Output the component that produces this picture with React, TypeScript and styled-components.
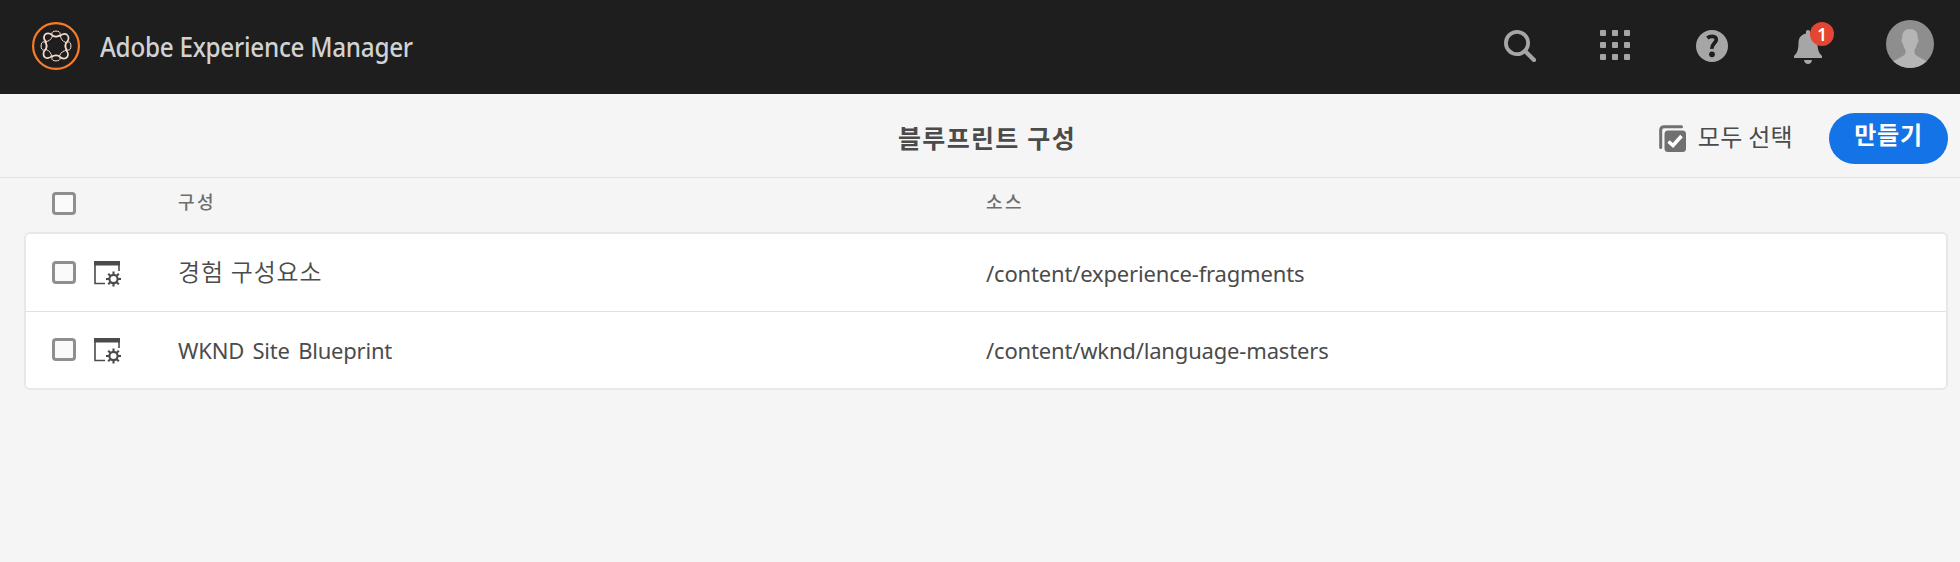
import React from "react";
import styled, { createGlobalStyle } from "styled-components";

const GlobalStyle = createGlobalStyle`
  * { box-sizing: border-box; }
  body {
    margin: 0;
    background: #f5f5f5;
    color: #4b4b4b;
    font-family: "Noto Sans", "Noto Sans CJK KR", sans-serif;
  }
`;

const Page = styled.div`
  display: flex;
  flex-direction: column;
  min-height: 562px;
`;

const Shell = styled.header`
  display: flex;
  align-items: center;
  justify-content: space-between;
  height: 94px;
  padding: 0 26px 2px 32px;
  background: #1e1e1e;
  color: #a6a6a6;
`;

const Brand = styled.div`
  display: flex;
  align-items: center;
  gap: 20px;
  svg { display: block; }
`;

const BrandName = styled.span`
  padding-top: 2px;
  color: #d2d2d2;
  font-size: 26.5px;
  line-height: 36px;
  font-weight: 500;
  letter-spacing: -0.3px;
  white-space: nowrap;
  transform: scaleX(0.916);
  transform-origin: left center;
`;

const Tools = styled.nav`
  display: flex;
  align-items: flex-start;
  height: 52px;
`;

const Tool = styled.div<{ $gap: number; $drop?: number }>`
  position: relative;
  display: flex;
  margin-left: ${(p) => p.$gap}px;
  margin-top: ${(p) => p.$drop ?? 10}px;
  svg { display: block; }
`;

const Badge = styled.span`
  position: absolute;
  top: -8px;
  right: -12px;
  width: 24px;
  height: 24px;
  border-radius: 50%;
  background: #e34632;
  color: #fff;
  font-size: 17px;
  font-weight: 600;
  line-height: 25px;
  text-align: center;
`;

const ActionBar = styled.div`
  display: grid;
  grid-template-columns: 1fr auto 1fr;
  height: 84px;
  padding: 0 12px 0 26px;
  border-bottom: 1px solid #e1e1e1;
`;

const Title = styled.h1`
  grid-column: 2;
  margin: 26px 0 0;
  font-size: 25px;
  line-height: 36px;
  font-weight: 700;
  letter-spacing: 1.3px;
  white-space: nowrap;
`;

const Actions = styled.div`
  display: flex;
  justify-content: flex-end;
  align-items: flex-start;
  padding-top: 19px;
`;

const SelectAll = styled.button`
  display: flex;
  align-items: center;
  gap: 12px;
  height: 46px;
  margin-right: 36px;
  padding: 0;
  border: 0;
  background: none;
  color: #4b4b4b;
  font: 400 24px/36px "Noto Sans CJK KR", sans-serif;
  letter-spacing: 0.3px;
  svg { margin-top: 5px; }
`;

const CreateButton = styled.button`
  width: 119px;
  height: 51px;
  padding: 0 0 9px;
  border: 0;
  border-radius: 26px;
  background: #1473e6;
  color: #fff;
  font: 700 24px/36px "Noto Sans CJK KR", sans-serif;
  letter-spacing: 0.8px;
`;

const TableGrid = styled.div`
  display: grid;
  grid-template-columns: 42px 84px 808px 1fr;
  align-items: center;
`;

const TableHead = styled(TableGrid)`
  height: 54px;
  padding: 0 0 4px 52px;
`;

const HeadCell = styled.span`
  padding-bottom: 2px;
  color: #6e6e6e;
  font-size: 18px;
  line-height: 26px;
  font-weight: 500;
  letter-spacing: 2.4px;
`;

const Card = styled.div`
  margin: 0 12px 0 24px;
  border: 2px solid #e8e8e8;
  border-radius: 6px;
  background: #fff;
`;

const Row = styled(TableGrid)`
  height: 77px;
  padding: 0 0 1px 26px;
  & + & {
    border-top: 1px solid #e1e1e1;
  }
`;

const Cell = styled.span<{ $spacing?: number; $korean?: boolean }>`
  padding-top: ${(p) => (p.$korean ? 0 : 1)}px;
  font-size: ${(p) => (p.$korean ? 24 : 22)}px;
  font-weight: ${(p) => (p.$korean ? 350 : 400)};
  line-height: 34px;
  letter-spacing: ${(p) => p.$spacing ?? 0}px;
  word-spacing: ${(p) => (p.$korean ? 0 : 3)}px;
  white-space: nowrap;
`;

const Checkbox = styled.span`
  width: 24px;
  height: 23px;
  border: 3px solid #8f8f8f;
  border-radius: 4px;
  background: #fafafa;
`;

const Empty = styled.span``;

const LogoIcon = () => (
  <svg width="48" height="48" viewBox="0 0 48 48" fill="none">
    <circle cx="24" cy="24" r="22.9" stroke="#fa7d26" strokeWidth="2.2" />
    <g stroke="#f6dccb">
      {[0, 90, 180, 270].map((a) => (
        <g key={a} transform={`rotate(${a} 24 24)`}>
          <ellipse cx="24" cy="12" rx="4.200" ry="2.900" strokeWidth="1" />
          <path d="M20 13C17.500 10.800 14 11 12.600 13.200C11.300 15.500 12.500 18.500 14.500 20.500" strokeWidth="1.700" />
          <path d="M20 13C21.500 15 26.500 15 28 13" strokeWidth="1.700" />
          <path d="M20.500 14C19.500 17.500 16.500 19.500 13.500 19.500" strokeWidth="1" />
        </g>
      ))}
    </g>
  </svg>
);

const SearchIcon = () => (
  <svg width="32" height="32" viewBox="0 0 32 32" fill="none" stroke="currentColor" strokeWidth="3.8">
    <circle cx="13" cy="13" r="11.100" />
    <path d="M21 21L30 30" strokeWidth="4.200" strokeLinecap="round" />
  </svg>
);

const AppsIcon = () => (
  <svg width="30" height="30" viewBox="0 0 30 30" fill="currentColor">
    {[0, 12, 24].map((y) =>
      [0, 12, 24].map((x) => <rect key={`${x}-${y}`} x={x} y={y} width="6" height="6" rx="1" />)
    )}
  </svg>
);

const HelpIcon = () => (
  <svg width="32" height="32" viewBox="0 0 32 32">
    <circle cx="16" cy="16" r="16" fill="currentColor" />
    <path d="M11.300 8Q13.500 6.300 16.200 6.300C19 6.300 20.600 7.900 20.200 10.200C19.800 12.900 15.600 14 15.900 18.800" fill="none" stroke="#1e1e1e" strokeWidth="3.800" />
    <circle cx="16" cy="24.300" r="2.900" fill="#1e1e1e" />
  </svg>
);

const BellIcon = () => (
  <svg width="28" height="34" viewBox="0 0 28 34" fill="currentColor">
    <path d="M12 1.500Q12 0 14 0Q16 0 16 1.500V3.500C21 4.500 23.500 8 23.500 13C23.500 20 25 23 28 26V28H0V26C3 23 4.500 20 4.500 13C4.500 8 7 4.500 12 3.500Z" />
    <path d="M10 30H18C17.600 32.500 16.200 34 14 34C11.800 34 10.400 32.500 10 30Z" />
  </svg>
);

const AvatarIcon = () => (
  <svg width="48" height="48" viewBox="0 0 48 48">
    <circle cx="24" cy="24" r="24" fill="#8e8e8e" />
    <path d="M24 9C19 9 16 12 16.200 18.500C15 19 15.500 23 17 24C17.500 26.500 18.500 28.500 19.500 30C20 33.500 19 35 16 36.500L7.300 41.200A24 24 0 0 0 40.700 41.200L32 36.500C29 35 28 33.500 28.500 30C29.500 28.500 30.500 26.500 31 24C32.500 23 33 19 31.800 18.500C32 12 29 9 24 9Z" fill="#b5b5b5" />
  </svg>
);

const SelectAllIcon = () => (
  <svg width="27" height="27" viewBox="0 0 27 27" fill="none">
    <path d="M1.700 22.500V5Q1.700 1.700 5 1.700H22.500" stroke="#707070" strokeWidth="3" strokeLinecap="round" />
    <rect x="5.500" y="5.500" width="21.500" height="21.500" rx="3.500" fill="#707070" />
    <path d="M9.500 16.500L14 20.500L22.500 11" stroke="#fff" strokeWidth="3.600" />
  </svg>
);

const BlueprintIcon = () => (
  <svg width="27" height="26" viewBox="0 0 27 26" fill="none" stroke="#4b4b4b">
    <path d="M0 0H26V4.500H0Z" fill="#4b4b4b" stroke="none" />
    <path d="M1 4V22.500H11M25 4V10" strokeWidth="1.600" />
    <circle cx="19.500" cy="18" r="4.100" strokeWidth="2.100" />
    {[0, 45, 90, 135, 180, 225, 270, 315].map((a) => (
      <path key={a} d="M19.500 13.500V10.500" strokeWidth="2.100" transform={`rotate(${a} 19.500 18)`} />
    ))}
  </svg>
);

const IconCell = styled.span`
  display: flex;
  padding-top: 3px;
`;

const rows = [
  { name: "경험 구성요소", korean: true, source: "/content/experience-fragments" },
  { name: "WKND Site Blueprint", korean: false, source: "/content/wknd/language-masters" },
];

export default function App() {
  return (
    <Page>
      <GlobalStyle />
      <Shell>
        <Brand>
          <LogoIcon />
          <BrandName>Adobe Experience Manager</BrandName>
        </Brand>
        <Tools>
          <Tool $gap={0}><SearchIcon /></Tool>
          <Tool $gap={64}><AppsIcon /></Tool>
          <Tool $gap={66}><HelpIcon /></Tool>
          <Tool $gap={66}><BellIcon /><Badge>1</Badge></Tool>
          <Tool $gap={64} $drop={0}><AvatarIcon /></Tool>
        </Tools>
      </Shell>
      <ActionBar>
        <Title>블루프린트 구성</Title>
        <Actions>
          <SelectAll><SelectAllIcon />모두 선택</SelectAll>
          <CreateButton>만들기</CreateButton>
        </Actions>
      </ActionBar>
      <TableHead>
        <Checkbox />
        <Empty />
        <HeadCell>구성</HeadCell>
        <HeadCell>소스</HeadCell>
      </TableHead>
      <Card>
        {rows.map((row) => (
          <Row key={row.source}>
            <Checkbox />
            <IconCell><BlueprintIcon /></IconCell>
            <Cell $korean={row.korean} $spacing={row.korean ? 0.8 : -0.22}>{row.name}</Cell>
            <Cell $spacing={-0.17}>{row.source}</Cell>
          </Row>
        ))}
      </Card>
    </Page>
  );
}
